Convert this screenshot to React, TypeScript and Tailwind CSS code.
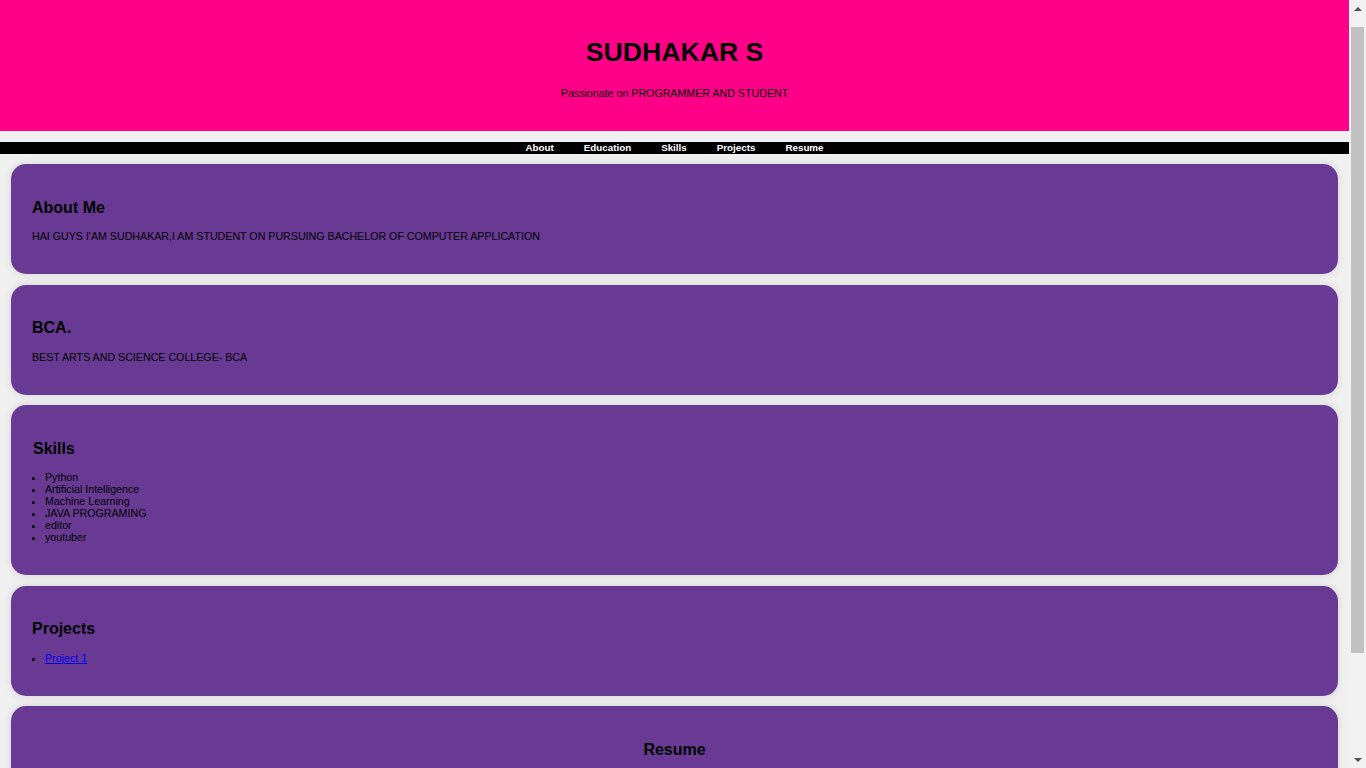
const links = ['About', 'Education', 'Skills', 'Projects', 'Resume']

const skills = [
  'Python',
  'Artificial Intelligence',
  'Machine Learning',
  'JAVA PROGRAMING',
  'editor',
  'youtuber',
]

const Card = ({ children, center = false }: { children: React.ReactNode; center?: boolean }) => {
  return (
    <section
      className={`mx-[11px] rounded-[15px] bg-[#693a93] px-[21px] py-5 text-black shadow-[0_0_8px_rgba(0,0,0,0.12)] ${center ? 'text-center' : ''}`}
    >
      {children}
    </section>
  )
}

const Title = ({ children }: { children: React.ReactNode }) => (
  <h2 className="my-[13.5px] text-[16px] font-bold leading-[19px]">{children}</h2>
)

// browser scrollbar as seen in the screenshot
const ScrollBar = () => (
  <div className="flex h-screen w-[17px] shrink-0 flex-col items-center bg-[#f1f1f1]">
    <div className="flex h-[17px] w-full items-center justify-center">
      <svg width="8" height="4" viewBox="0 0 8 4">
        <path d="M0 4 L4 0 L8 4 Z" fill="#505050" />
      </svg>
    </div>
    <div className="mt-[10px] h-[626px] w-[13px] bg-[#c1c1c1]" />
    <div className="flex-1" />
    <div className="flex h-[17px] w-full items-center justify-center">
      <svg width="8" height="4" viewBox="0 0 8 4">
        <path d="M0 0 L8 0 L4 4 Z" fill="#505050" />
      </svg>
    </div>
  </div>
)

const App = () => {
  return (
    <div className="flex h-screen overflow-hidden bg-[#f0f0f0] font-['Liberation_Sans',Arial,sans-serif] text-black">
      <div className="min-w-0 flex-1">
        <header className="bg-[#ff0088] pt-5 pb-5 text-center">
          <h1 className="mt-[17px] mb-5 text-[26.67px] font-bold leading-[30px]">SUDHAKAR S</h1>
          <p className="mb-3 text-[10.67px] leading-3">Passionate on PROGRAMMER AND STUDENT</p>
        </header>

        <nav className="mt-[11px] flex h-3 items-center justify-center bg-black">
          {links.map((l) => (
            <a key={l} href={`#${l.toLowerCase()}`} className="mx-[15px] text-[9.8px] font-bold leading-3 text-white">
              {l}
            </a>
          ))}
        </nav>

        <main className="mt-[10px] flex flex-col gap-[10.5px] pb-6">
          <Card>
            <Title>About Me</Title>
            <p className="mb-3 text-[10.67px] leading-3">
              HAI GUYS I'AM SUDHAKAR,I AM STUDENT ON PURSUING BACHELOR OF COMPUTER APPLICATION
            </p>
          </Card>

          <Card>
            <Title>BCA.</Title>
            <p className="mb-3 text-[10.67px] leading-3">BEST ARTS AND SCIENCE COLLEGE- BCA</p>
          </Card>

          <Card>
            <div className="pl-px">
              <Title>Skills</Title>
            </div>
            <ul className="mb-3 list-disc pl-[13px] text-[10.67px] leading-3">
              {skills.map((s) => (
                <li key={s}>{s}</li>
              ))}
            </ul>
          </Card>

          <Card>
            <Title>Projects</Title>
            <ul className="mb-3 list-disc pl-[13px] text-[10.67px] leading-3">
              <li>
                <a href="#project1" className="text-[#0000ee] underline">
                  Project 1
                </a>
              </li>
            </ul>
          </Card>

          <Card center>
            <Title>Resume</Title>
            <p className="mb-3 text-[10.67px] leading-3">
              <a href="#resume" className="text-[#0000ee] underline">
                Download Resume
              </a>
            </p>
          </Card>
        </main>
      </div>
      <ScrollBar />
    </div>
  )
}

export default App
